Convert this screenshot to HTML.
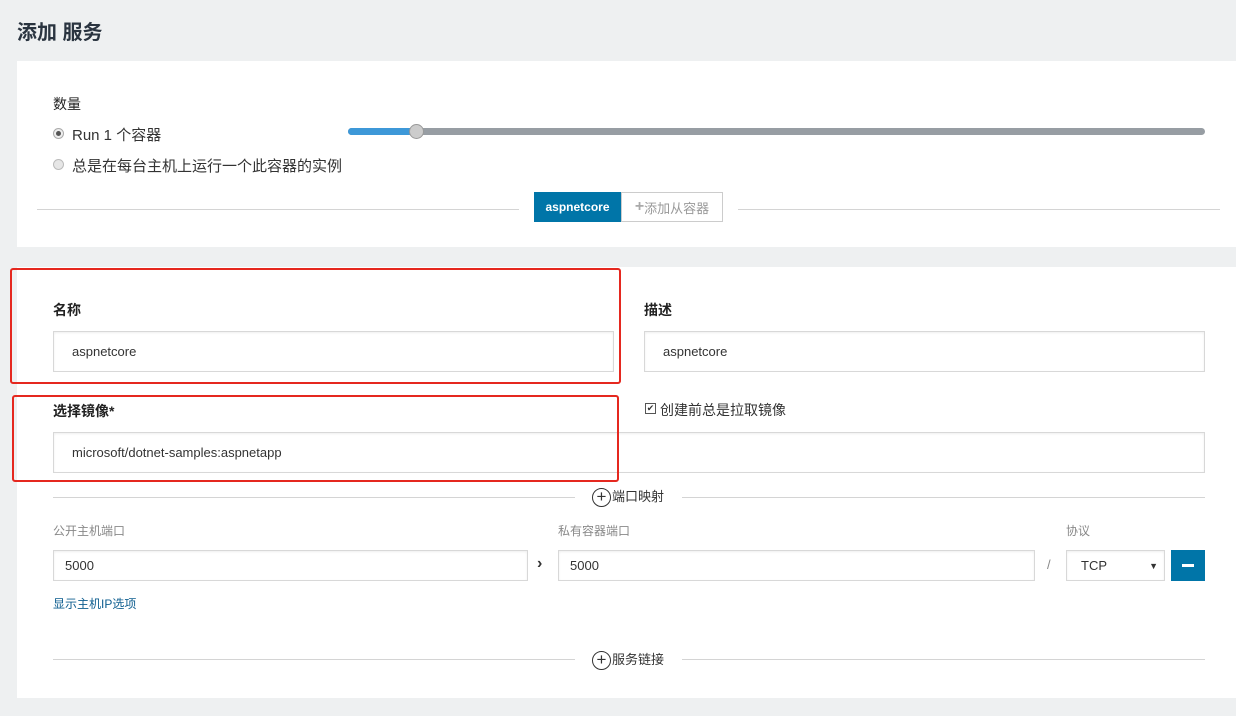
<!DOCTYPE html>
<html><head><meta charset="utf-8"><style>
*{box-sizing:border-box;margin:0;padding:0}
body{width:1236px;height:716px;background:#eef0f1;font-family:"Liberation Sans","Noto Sans CJK SC",sans-serif;color:#333;position:relative;overflow:hidden;font-size:14px}
.a{position:absolute}
.panel{position:absolute;background:#fff;left:17px;right:0}
.inp{position:absolute;border:1px solid #d8d8d8;box-shadow:inset 0 1px 2px #eee;background:#fff;font-size:13px;color:#333;padding-left:18px;display:flex;align-items:center}
.lbl{position:absolute;font-size:14px;font-weight:bold;color:#222}
.line{position:absolute;height:1px;background:#d4d4d4}
.red{position:absolute;border:2px solid #e5281f;border-radius:3px}
.sm{position:absolute;font-size:12px;color:#888}
.circ{display:inline-block;width:19px;height:19px;border:1.5px solid #333;border-radius:50%;text-align:center;line-height:16px;font-size:17px;vertical-align:middle;margin-right:1px}
</style></head><body>
<div class="a" style="left:17px;top:16px;font-size:20px;font-weight:bold;color:#2a3440">添加 服务</div>
<div class="panel" style="top:61px;height:186px"></div>
<div class="lbl" style="left:53px;top:94px;font-weight:normal">数量</div>
<div class="a" style="left:53px;top:128px;width:11px;height:11px;border:1px solid #aaa;border-radius:50%;background:#eee"><div style="width:5px;height:5px;background:#555;border-radius:50%;margin:2px"></div></div>
<div class="a" style="left:72px;top:124px;font-size:15px">Run 1 个容器</div>
<div class="a" style="left:53px;top:159px;width:11px;height:11px;border:1px solid #bbb;border-radius:50%;background:#e6e6e6"></div>
<div class="a" style="left:72px;top:155px;font-size:15px">总是在每台主机上运行一个此容器的实例</div>
<div class="a" style="left:348px;top:128px;width:857px;height:7px;background:#979da3;border-radius:4px"></div>
<div class="a" style="left:348px;top:128px;width:70px;height:7px;background:#3d98d8;border-radius:4px"></div>
<div class="a" style="left:409px;top:124px;width:15px;height:15px;border-radius:50%;background:#ccc;border:1px solid #999"></div>
<div class="line" style="left:37px;top:209px;width:482px"></div>
<div class="line" style="left:738px;top:209px;width:482px"></div>
<div class="a" style="left:534px;top:192px;width:87px;height:30px;background:#0075a8;color:#fff;font-size:12px;font-weight:bold;display:flex;align-items:center;justify-content:center">aspnetcore</div>
<div class="a" style="left:621px;top:192px;width:102px;height:30px;border:1px solid #ccc;color:#999;font-size:13px;display:flex;align-items:center;justify-content:center"><b style="color:#aaa;font-size:16px">+</b>添加从容器</div>
<div class="panel" style="top:267px;height:431px"></div>
<div class="lbl" style="left:53px;top:300px">名称</div>
<div class="inp" style="left:53px;top:331px;width:561px;height:41px">aspnetcore</div>
<div class="lbl" style="left:644px;top:300px">描述</div>
<div class="inp" style="left:644px;top:331px;width:561px;height:41px">aspnetcore</div>
<div class="lbl" style="left:53px;top:401px">选择镜像*</div>
<div class="a" style="left:645px;top:403px;width:11px;height:11px;border:1px solid #555;font-size:9px;line-height:9px;text-align:center">✔</div>
<div class="a" style="left:660px;top:400px;font-size:14px">创建前总是拉取镜像</div>
<div class="inp" style="left:53px;top:432px;width:1152px;height:41px">microsoft/dotnet-samples:aspnetapp</div>
<div class="red" style="left:10px;top:268px;width:611px;height:116px"></div>
<div class="red" style="left:12px;top:395px;width:607px;height:87px"></div>
<div class="line" style="left:53px;top:497px;width:522px"></div>
<div class="line" style="left:682px;top:497px;width:523px"></div>
<div class="a" style="left:592px;top:486px;font-size:13px"><span class="circ">+</span>端口映射</div>
<div class="sm" style="left:53px;top:522px">公开主机端口</div>
<div class="sm" style="left:558px;top:522px">私有容器端口</div>
<div class="sm" style="left:1066px;top:522px">协议</div>
<div class="inp" style="left:53px;top:550px;width:475px;height:31px;padding-left:11px">5000</div>
<div class="a" style="left:537px;top:555px;font-size:16px;font-weight:bold">›</div>
<div class="inp" style="left:558px;top:550px;width:477px;height:31px;padding-left:11px">5000</div>
<div class="a" style="left:1047px;top:557px;color:#888;font-size:13px">/</div>
<div class="inp" style="left:1066px;top:550px;width:99px;height:31px;padding-left:14px">TCP<span style="position:absolute;right:6px;font-size:9px">▼</span></div>
<div class="a" style="left:1171px;top:550px;width:34px;height:31px;background:#0075a8"><div style="width:12px;height:3px;background:#fff;margin:14px auto"></div></div>
<div class="a" style="left:53px;top:595px;font-size:12px;color:#0d5d8f">显示主机IP选项</div>
<div class="line" style="left:53px;top:659px;width:522px"></div>
<div class="line" style="left:682px;top:659px;width:523px"></div>
<div class="a" style="left:592px;top:649px;font-size:13px"><span class="circ">+</span>服务链接</div>
</body></html>
